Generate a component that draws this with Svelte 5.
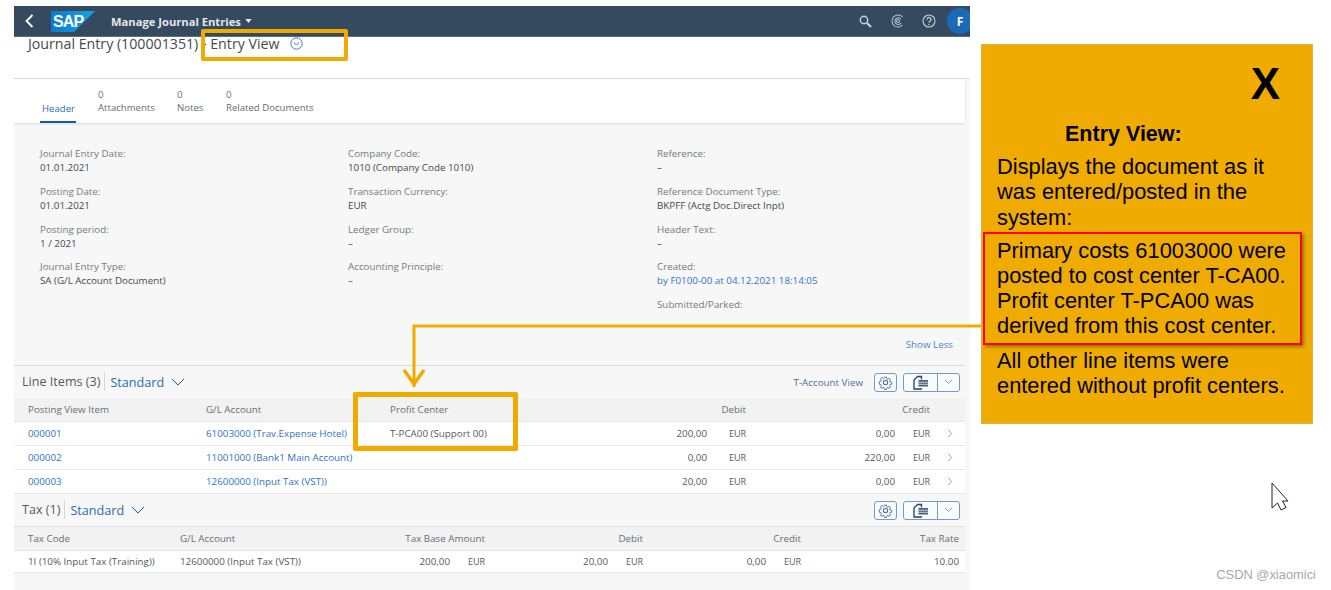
<script>
  const tabs = [
    { count: '0', label: 'Attachments', w: 79 },
    { count: '0', label: 'Notes', w: 49 },
    { count: '0', label: 'Related Documents', w: 100 }
  ];
  const columns = [
    [
      ['Journal Entry Date:', '01.01.2021'],
      ['Posting Date:', '01.01.2021'],
      ['Posting period:', '1 / 2021'],
      ['Journal Entry Type:', 'SA (G/L Account Document)']
    ],
    [
      ['Company Code:', '1010 (Company Code 1010)'],
      ['Transaction Currency:', 'EUR'],
      ['Ledger Group:', '–'],
      ['Accounting Principle:', '–']
    ],
    [
      ['Reference:', '–'],
      ['Reference Document Type:', 'BKPFF (Actg Doc.Direct Inpt)'],
      ['Header Text:', '–'],
      ['Created:', 'by F0100-00 at 04.12.2021 18:14:05', true],
      ['Submitted/Parked:', '']
    ]
  ];
  const lines = [
    ['000001', '61003000 (Trav.Expense Hotel)', 'T-PCA00 (Support 00)', '200,00', '0,00'],
    ['000002', '11001000 (Bank1 Main Account)', '', '0,00', '220,00'],
    ['000003', '12600000 (Input Tax (VST))', '', '20,00', '0,00']
  ];
</script>

{#snippet chevronDown(w)}
  <svg class="chev" width={w} height="8" viewBox="0 0 14 8"><path d="M1 1l6 6 6-6" fill="none" stroke="#0a5ea8" stroke-width="1"/></svg>
{/snippet}

{#snippet tools()}
  <span class="btn gear">
    <svg width="15" height="15" viewBox="0 0 16 16" fill="none" stroke="#3f6f9f" stroke-width="1.1">
      <path d="M6.8 1.2h2.4l.4 2 1.3.6 1.8-1.1 1.6 1.7-1.1 1.7.6 1.3 2 .4v2.4l-2 .4-.6 1.3 1.1 1.7-1.6 1.7-1.8-1.1-1.3.6-.4 1.9H6.8l-.4-1.9-1.3-.6-1.8 1.1-1.6-1.7 1.1-1.7-.6-1.3-2-.4V6.800l2-.4.6-1.300-1.100-1.700 1.600-1.700 1.800 1.100 1.300-.6z" transform="translate(1.2 1.200) scale(.85)"/>
      <circle cx="8" cy="8" r="2.300"/>
    </svg>
  </span>
  <span class="split">
    <span class="seg main">
      <svg width="17" height="15" viewBox="0 0 17 15">
        <path d="M5.500 1.500h4v3M5.500 1.500L2 5v9h8" fill="none" stroke="#2c3e55" stroke-width="1.300"/>
        <rect x="6.500" y="5" width="9.500" height="6.500" fill="#46617f"/>
        <path d="M6.500 7.200h9.500M6.500 9.300h9.500" stroke="#fff" stroke-width=".7"/>
      </svg>
    </span>
    <span class="seg arrow">
      <svg width="9" height="6" viewBox="0 0 9 6"><path d="M.8.800l3.700 3.700L8.200.800" fill="none" stroke="#7f9fbf" stroke-width="1"/></svg>
    </span>
  </span>
{/snippet}

<div class="stage">
  <main class="app">
    <header class="shell">
      <svg class="back" width="9" height="14" viewBox="0 0 9 14"><path d="M7.500 1L1.500 7l6 6" fill="none" stroke="#fff" stroke-width="1.800"/></svg>
      <span class="logo">
        <svg width="44" height="21" viewBox="0 0 44 21">
          <defs><linearGradient id="sapg" x1="0" y1="0" x2="1" y2="0"><stop offset="0" stop-color="#0a7ad1"/><stop offset="1" stop-color="#14a5e8"/></linearGradient></defs>
          <polygon points="0,0 44,0 23,21 0,21" fill="url(#sapg)"/>
        </svg>
        <span class="sap">SAP</span>
      </span>
      <span class="app-title">Manage Journal Entries</span>
      <svg class="caret" width="7" height="4" viewBox="0 0 8 5"><path d="M0 0h8L4 5z" fill="#e8edf2"/></svg>
      <span class="shell-icons">
        <svg class="i-search" width="13" height="13" viewBox="0 0 13 13" fill="none" stroke="#cfd7df"><circle cx="5" cy="5" r="3.700" stroke-width="1.400"/><path d="M8 8l4 4" stroke-width="2"/></svg>
        <svg class="i-co" width="13" height="14" viewBox="0 0 13 14" fill="none" stroke="#b6c0cb" stroke-width="1.100"><path d="M11.500 3A6 6 0 1 0 11.500 11"/><path d="M10 5a3.400 3.400 0 1 0 0 4.200"/><circle cx="7" cy="7" r="1.500"/></svg>
        <svg class="i-help" width="14" height="14" viewBox="0 0 14 14" fill="none" stroke="#c6ced7" stroke-width="1.100"><circle cx="7" cy="7" r="6"/><path d="M5 5.400a2 2 0 1 1 3 1.800c-.7.400-1 .8-1 1.500M7 10v1.200" stroke-width="1.300"/></svg>
        <span class="avatar">F</span>
      </span>
    </header>

    <div class="titlebar"><span>Journal Entry (100001351) - Entry View</span>
      <svg width="13" height="13" viewBox="0 0 13 13" fill="none" stroke="#3f7fc0"><circle cx="6.500" cy="6.500" r="5.700"/><path d="M3.800 5.300l2.700 2.700 2.700-2.700"/></svg>
    </div>

    <div class="content">
      <nav class="tabs">
        <div class="tab active">Header</div>
        {#each tabs as t}
          <div class="tab" style="width:{t.w}px"><span>{t.count}</span><span>{t.label}</span></div>
        {/each}
      </nav>

      <section class="form">
        <div class="cols">
          {#each columns as col}
            <div class="col">
              {#each col as f}
                <div class="field">
                  <div class="lbl">{f[0]}</div>
                  <div class="val" class:link={f[2]}>{f[1]}</div>
                </div>
              {/each}
            </div>
          {/each}
        </div>
        <div class="show-less">Show Less</div>
      </section>

      <section class="toolbar first">
        <span class="tb-title">Line Items (3)</span>
        <span class="tb-var">Standard</span>
        {@render chevronDown(14)}
        <span class="tb-right">
          <span class="t-acc">T-Account View</span>
          {@render tools()}
        </span>
      </section>
      <div class="grid li head">
        <span>Posting View Item</span><span>G/L Account</span><span>Profit Center</span>
        <span class="r">Debit</span><span class="r">Credit</span><span></span>
      </div>
      {#each lines as l}
        <div class="grid li row">
          <span class="link">{l[0]}</span>
          <span class="link">{l[1]}</span>
          <span>{l[2]}</span>
          <span class="amt d"><span>{l[3]}</span><span>EUR</span></span>
          <span class="amt c"><span>{l[4]}</span><span>EUR</span></span>
          <svg class="more" width="6" height="9" viewBox="0 0 6 9"><path d="M1 .8l3.700 3.700L1 8.200" fill="none" stroke="#9a9da0"/></svg>
        </div>
      {/each}

      <section class="toolbar second">
        <span class="tb-title">Tax (1)</span>
        <span class="tb-var">Standard</span>
        {@render chevronDown(14)}
        <span class="tb-right">{@render tools()}</span>
      </section>
      <div class="grid tax head">
        <span>Tax Code</span><span>G/L Account</span><span class="r">Tax Base Amount</span>
        <span class="r">Debit</span><span class="r">Credit</span><span class="r">Tax Rate</span>
      </div>
      <div class="grid tax row">
        <span>1I (10% Input Tax (Training))</span>
        <span class="gl">12600000 (Input Tax (VST))</span>
        <span class="amt c"><span>200,00</span><span>EUR</span></span>
        <span class="amt c"><span>20,00</span><span>EUR</span></span>
        <span class="amt c"><span>0,00</span><span>EUR</span></span>
        <span class="r">10.00</span>
      </div>
    </div>
  </main>

  <aside class="note">
    <div class="x">X</div>
    <div class="note-title">Entry View:</div>
    <p class="p1">Displays the document as it was entered/posted in the system:</p>
    <p class="boxed">Primary costs 61003000 were posted to cost center T-CA00. Profit center T-PCA00 was derived from this cost center.</p>
    <p class="p3">All other line items were entered without profit centers.</p>
  </aside>

  <div class="mark mark-title"></div>
  <div class="mark mark-profit"></div>
  <svg class="connector" width="570" height="70" viewBox="0 0 570 70">
    <path d="M570 2H3v61" fill="none" stroke="#f0ab00" stroke-width="3"/>
    <path d="M-7 46L3 60 13 46" fill="none" stroke="#f0ab00" stroke-width="3.500"/>
  </svg>
  <svg class="cursor" width="18" height="29" viewBox="0 0 18 29">
    <path d="M1 1v25l5.500-5 3.500 7 5-2.500-3.500-6.500H17z" fill="#fff" stroke="#222" stroke-width="1"/>
  </svg>
  <div class="watermark">CSDN @xiaomici</div>
</div>

<style>
  :global(body) { margin: 0; background: #fff; }
  .stage {
    position: relative; width: 1331px; height: 590px; overflow: hidden;
    display: flex; align-items: flex-start;
    font-family: "Open Sans", "Noto Sans", sans-serif; color: #32363a;
  }
  .app { width: 956px; margin: 6px 0 0 14px; height: 584px; background: #f7f7f7; flex: none; overflow: hidden; }

  .shell {
    height: 31px; background: #354a5f; display: flex; align-items: center;
    border-bottom: 1px solid #5a6d80; box-sizing: border-box;
  }
  .back { margin-left: 11px; }
  .logo { position: relative; width: 44px; height: 21px; margin-left: 17px; display: block; }
  .logo svg { display: block; }
  .sap {
    position: absolute; left: 2px; top: 1px; color: #fff; font: bold 16px/19px "Liberation Sans", sans-serif;
    letter-spacing: -0.9px;
  }
  .app-title { margin-left: 16px; color: #e4e8ed; font-size: 11.200px; font-weight: 700; white-space: nowrap; }
  .caret { margin-left: 4px; }
  .shell-icons { margin-left: auto; display: flex; align-items: center; }
  .i-co { margin-left: 19px; }
  .i-help { margin-left: 18px; }
  .avatar {
    width: 26px; height: 26px; border-radius: 50%; background: #1b6ab8; color: #fff; font-weight: 700;
    font-size: 12px; display: flex; align-items: center; justify-content: center;
    margin: 0 -3px 0 11px;
  }

  .titlebar {
    height: 41px; background: #fff; border-bottom: 1px solid #dcdcdc; box-sizing: content-box;
    padding-left: 14px; display: flex; align-items: flex-start; gap: 11px;
    font-size: 14.200px; line-height: 15px; color: #45494d;
  }
  .titlebar span { margin-top: -1px; }

  .content { width: 951px; }
  .tabs {
    height: 44px; background: #fff; display: flex; padding-left: 26px;
    box-shadow: 0 1px 2px rgba(0,0,0,.12); position: relative;
    font-size: 9.600px; color: #6a6d70;
  }
  .tab { display: flex; flex-direction: column; justify-content: flex-end; padding-bottom: 9px; line-height: 13px; white-space: nowrap; }
  .tab.active {
    width: 36px; margin-right: 22px; box-sizing: border-box; padding-left: 2px;
    padding-bottom: 8px; position: relative; color: #2f6fae;
  }
  .tab.active::after { content: ""; position: absolute; left: 0; right: 0; bottom: 0; height: 2px; background: #0a5ea8; }

  .form { height: 243px; box-sizing: border-box; padding: 24px 12px 13px 26px; display: flex; flex-direction: column; border-bottom: 1px solid #dcdcdc; }
  .cols { display: grid; grid-template-columns: 308px 309px 1fr; }
  .field { height: 37.800px; }
  .lbl { font-size: 9.800px; line-height: 14px; color: #76797c; }
  .val { font-size: 9.800px; line-height: 14px; color: #45494d; }
  .link { color: #2f74c6; }
  .val.link { color: #2f74c6; }
  .show-less { margin-top: auto; text-align: right; font-size: 9.800px; line-height: 14px; color: #4a86cc; }

  .toolbar { height: 32px; display: flex; align-items: center; padding-left: 8px; box-sizing: border-box; }
  .tb-title { font-size: 12.600px; color: #55595d; padding-right: 4px; border-right: 1px solid #d5d5d5; line-height: 18px; }
  .tb-var { font-size: 12.600px; color: #2c6cb0; margin-left: 5px; }
  .chev { margin-left: 7px; }
  .tb-right { margin-left: auto; display: flex; align-items: center; padding-right: 5px; }
  .t-acc { font-size: 9.800px; color: #4b6f99; margin-right: 11px; }
  .btn, .split { height: 19px; box-sizing: border-box; border: 1.500px solid #6d9dcb; border-radius: 3px; display: flex; align-items: center; justify-content: center; background: #fafbfc; }
  .gear { width: 23px; }
  .split { width: 57px; margin-left: 6px; }
  .seg { display: flex; height: 100%; align-items: center; justify-content: center; }
  .main { width: 33px; border-right: 1.500px solid #6d9dcb; box-sizing: content-box; }
  .arrow { flex: 1; }

  .grid { display: grid; align-items: center; padding-left: 14px; font-size: 9.800px; white-space: nowrap; box-sizing: border-box; }
  .li { grid-template-columns: 178px 184px 160px 196px 184px 1fr; }
  .tax { grid-template-columns: 152px 147px 158px 158px 158px 158px; }
  .head { background: #f2f2f2; color: #6a6d70; border-bottom: 1px solid #e3e3e3; }
  .li.head { height: 24px; }
  .tax.head { height: 25px; border-top: 1px solid #e5e5e5; }
  .row { background: #fff; color: #55595d; border-bottom: 1px solid #e8e8e8; }
  .li.row { height: 24px; }
  .tax.row { height: 22px; }
  .r { text-align: right; }
  .amt { display: flex; justify-content: flex-end; }
  .amt span:last-child { width: 18px; text-align: right; font-size: 9px; }
  .amt.d { gap: 21px; }
  .amt.c { gap: 17px; }
  .more { margin-left: 17px; }

  .note {
    flex: none; box-sizing: border-box; width: 332px; height: 380px; margin: 44px 0 0 11px;
    background: #efab00; border: 1px solid #e2b23c; position: relative;
    font-family: "Liberation Sans", Arial, sans-serif; font-size: 21.850px; line-height: 25.200px; color: #000;
    padding-left: 15px;
  }
  .x { position: absolute; right: 32px; top: 14px; font-size: 44px; line-height: 50px; font-weight: 700; }
  .note-title { font-weight: 700; margin: 77px 0 7px 68px; font-size: 21.500px; }
  .note p { margin: 0; }
  .p1 { width: 290px; }
  .note .boxed { margin-top: 2px; margin-left: -14px; padding: 4px 0 3px 12px; width: 319px; box-sizing: border-box; border: 2px solid #ff0000; box-shadow: 2px 2px 3px rgba(90,70,30,.55); height: 113px; }
  .note .p3 { margin-top: 3px; width: 300px; }

  .mark { position: absolute; border: 4px solid #f0ab00; border-radius: 2px; box-sizing: border-box; }
  .mark-title { left: 201px; top: 29px; width: 147px; height: 32px; }
  .mark-profit { left: 353px; top: 392px; width: 165px; height: 59px; border-width: 5px; }
  .connector { position: absolute; left: 411px; top: 324px; overflow: visible; }
  .cursor { position: absolute; left: 1271px; top: 482px; }
  .watermark { position: absolute; right: 15px; bottom: 8px; font: 12.900px/14px "Liberation Sans", Arial, sans-serif; color: #a9a9a9; }
</style>
